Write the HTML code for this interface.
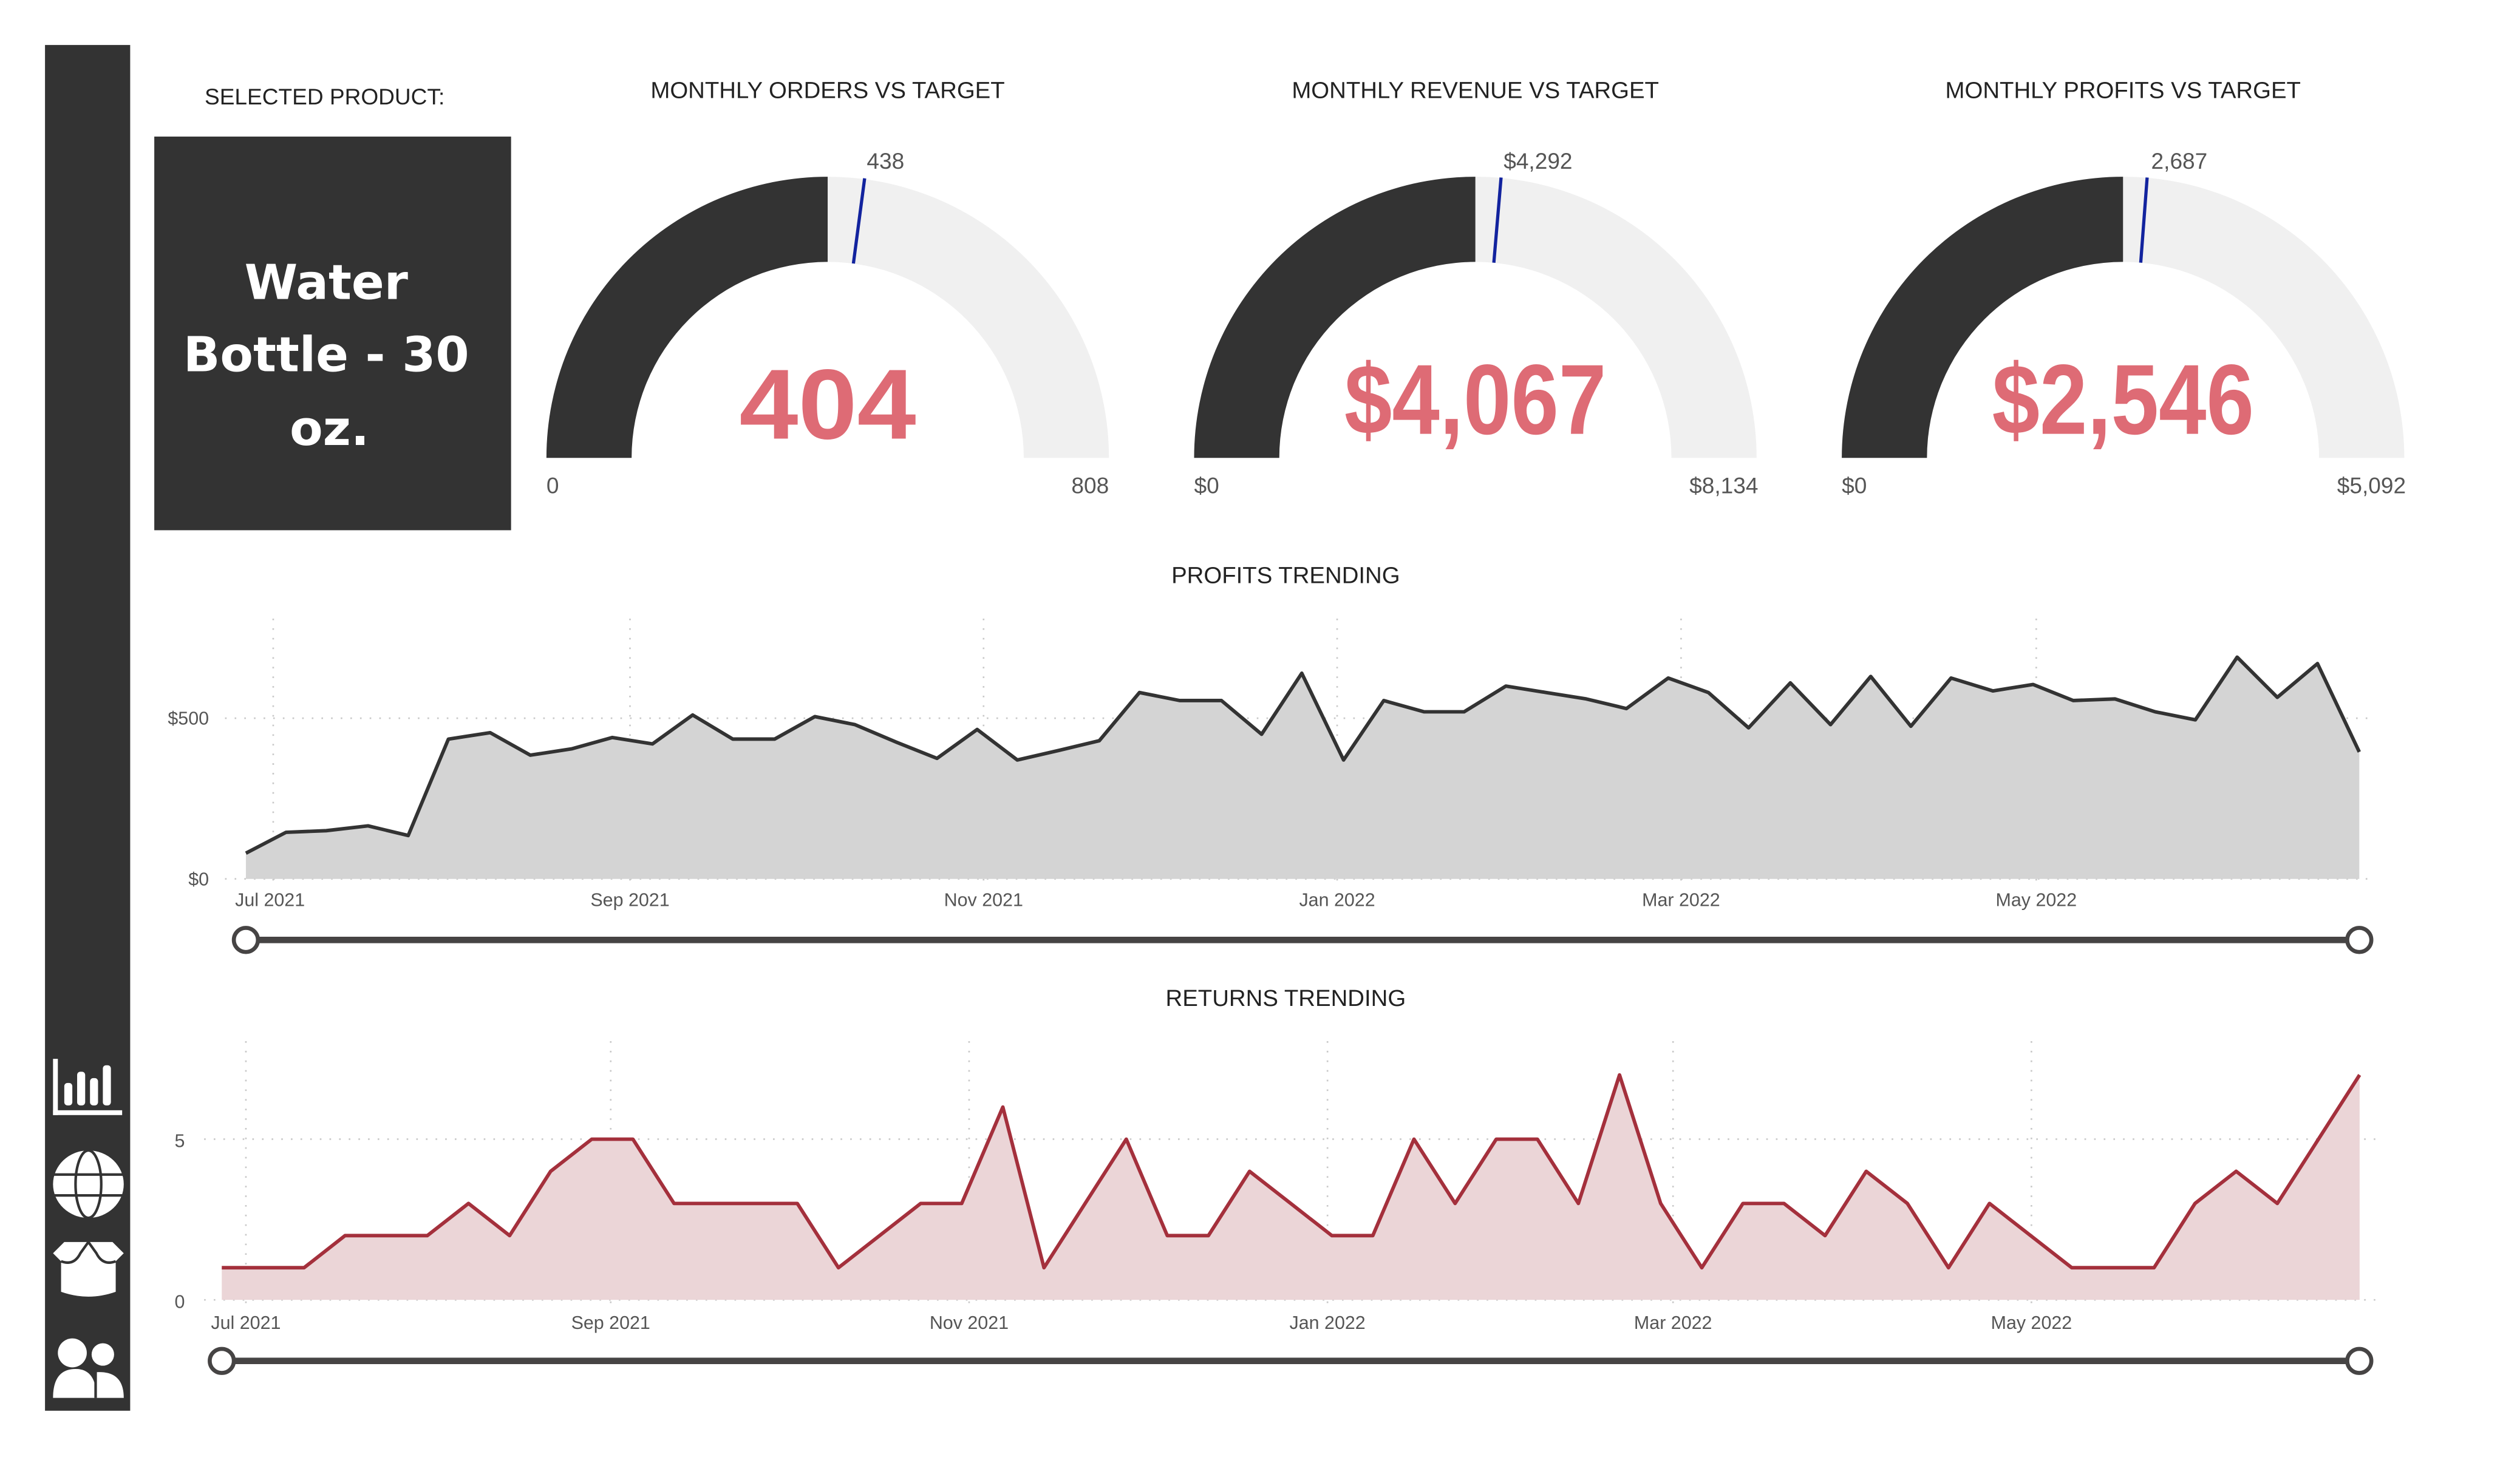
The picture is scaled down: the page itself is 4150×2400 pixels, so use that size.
<!DOCTYPE html>
<html><head><meta charset="utf-8"><style>html,body{margin:0;padding:0;background:#fff;width:4150px;height:2400px;overflow:hidden}svg{display:block}</style></head>
<body>
<svg width="4150" height="2400" viewBox="0 0 1568 906.8" preserveAspectRatio="none" xmlns="http://www.w3.org/2000/svg" font-family="'DejaVu Sans','Liberation Sans',sans-serif">
<rect x="0" y="0" width="1568" height="906.8" fill="#fff"/>
<!-- sidebar -->
<rect x="28" y="28" width="53" height="850" fill="#333"/>
<g fill="#fff">
 <rect x="33" y="659" width="3" height="35"/><rect x="33" y="691" width="43" height="3"/>
 <rect x="40" y="674" width="5" height="14" rx="2"/><rect x="48" y="667" width="5" height="21" rx="2"/><rect x="56" y="671" width="5" height="17" rx="2"/><rect x="64" y="663" width="5" height="25" rx="2"/>
 <ellipse cx="55" cy="737" rx="22" ry="21"/>
 <path d="M33 780 L40 773 L70 773 L77 780 L72 785 L72 804 Q55 810 38 804 L38 785 Z"/>
 <circle cx="45" cy="842" r="9"/><circle cx="64" cy="843" r="7"/>
 <path d="M33 870 Q33 852 47 852 Q60 852 60 870 Z"/><path d="M60 870 L60 854 Q77 853 77 870 Z"/>
</g>
<g stroke="#333" fill="none" stroke-width="1.6">
 <ellipse cx="55" cy="737" rx="8" ry="21"/><line x1="33" y1="731" x2="77" y2="731"/><line x1="33" y1="744" x2="77" y2="744"/>
 <path d="M38 785 Q46 788 50 780 L55 773 L60 780 Q64 788 72 785"/>
 <line x1="59.5" y1="852" x2="59.5" y2="870"/>
</g>
<!-- selected product -->
<text x="202" y="65" font-size="14" fill="#222" text-anchor="middle" font-family="'Liberation Sans',sans-serif">SELECTED PRODUCT:</text>
<rect x="96" y="85" width="222" height="245" fill="#333"/>
<g font-weight="bold" font-size="30" fill="#fff" text-anchor="middle">
<text x="203" y="186">Water</text><text x="203" y="231">Bottle - 30</text><text x="205" y="277">oz.</text>
</g>
<!-- gauges -->
<g font-family="'Liberation Sans',sans-serif">
<text x="515" y="61" font-size="14.5" fill="#222" text-anchor="middle">MONTHLY ORDERS VS TARGET</text>
<text x="918" y="61" font-size="14.5" fill="#222" text-anchor="middle">MONTHLY REVENUE VS TARGET</text>
<text x="1321" y="61" font-size="14.5" fill="#222" text-anchor="middle">MONTHLY PROFITS VS TARGET</text>
</g>
<g>
 <path d="M515 110 A175 175 0 0 1 690 285 L637 285 A122 122 0 0 0 515 163 Z" fill="#f0f0f0"/>
 <path d="M340 285 A175 175 0 0 1 515 110 L515 163 A122 122 0 0 0 393 285 Z" fill="#333"/>
 <line x1="538" y1="111" x2="531" y2="164" stroke="#12239e" stroke-width="2"/>
 <path d="M918 110 A175 175 0 0 1 1093 285 L1040 285 A122 122 0 0 0 918 163 Z" fill="#f0f0f0"/>
 <path d="M743 285 A175 175 0 0 1 918 110 L918 163 A122 122 0 0 0 796 285 Z" fill="#333"/>
 <line x1="934" y1="110.5" x2="929.5" y2="163.5" stroke="#12239e" stroke-width="2"/>
 <path d="M1321 110 A175 175 0 0 1 1496 285 L1443 285 A122 122 0 0 0 1321 163 Z" fill="#f0f0f0"/>
 <path d="M1146 285 A175 175 0 0 1 1321 110 L1321 163 A122 122 0 0 0 1199 285 Z" fill="#333"/>
 <line x1="1336" y1="110.5" x2="1332" y2="163.5" stroke="#12239e" stroke-width="2"/>
</g>
<g font-family="'Liberation Sans',sans-serif" font-size="14" fill="#555">
 <text x="551" y="105" text-anchor="middle">438</text>
 <text x="957" y="105" text-anchor="middle">$4,292</text>
 <text x="1356" y="105" text-anchor="middle">2,687</text>
 <text x="340" y="307">0</text><text x="690" y="307" text-anchor="end">808</text>
 <text x="743" y="307">$0</text><text x="1094" y="307" text-anchor="end">$8,134</text>
 <text x="1146" y="307">$0</text><text x="1497" y="307" text-anchor="end">$5,092</text>
</g>
<g font-family="'Liberation Sans',sans-serif" font-weight="bold" font-size="62" fill="#de6b75" text-anchor="middle">
 <text x="515" y="273" textLength="110" lengthAdjust="spacingAndGlyphs">404</text>
 <text x="918" y="270" textLength="163" lengthAdjust="spacingAndGlyphs">$4,067</text>
 <text x="1321" y="270" textLength="163" lengthAdjust="spacingAndGlyphs">$2,546</text>
</g>
<!-- profits trending -->
<text x="800" y="363" font-size="14.5" fill="#222" text-anchor="middle" font-family="'Liberation Sans',sans-serif">PROFITS TRENDING</text>
<g stroke="#c8c8c8" stroke-width="1" stroke-dasharray="1 5">
 <line x1="140" y1="447" x2="1478" y2="447"/><line x1="140" y1="547" x2="1478" y2="547"/>
 <line x1="170" y1="385" x2="170" y2="550"/><line x1="392" y1="385" x2="392" y2="550"/><line x1="612" y1="385" x2="612" y2="550"/><line x1="832" y1="385" x2="832" y2="550"/><line x1="1046" y1="385" x2="1046" y2="550"/><line x1="1267" y1="385" x2="1267" y2="550"/>
</g>
<polygon fill="#d4d4d4" points="153,547 153,531 178,518 203,517 229,514 254,520 279,460 305,456 330,470 356,466 381,459 406,463 431,445 456,460 482,460 507,446 532,451 558,462 583,472 608,454 633,473 659,467 684,461 709,431 734,436 760,436 785,457 810,419 836,473 861,436 886,443 911,443 937,427 962,431 987,435 1012,441 1038,422 1063,431 1088,453 1114,425 1139,451 1164,421 1189,452 1214,422 1240,430 1265,426 1290,436 1316,435 1341,443 1366,448 1392,409 1417,434 1442,413 1468,468 1468,547"/>
<polyline fill="none" stroke="#333" stroke-width="2.2" stroke-linejoin="round" points="153,531 178,518 203,517 229,514 254,520 279,460 305,456 330,470 356,466 381,459 406,463 431,445 456,460 482,460 507,446 532,451 558,462 583,472 608,454 633,473 659,467 684,461 709,431 734,436 760,436 785,457 810,419 836,473 861,436 886,443 911,443 937,427 962,431 987,435 1012,441 1038,422 1063,431 1088,453 1114,425 1139,451 1164,421 1189,452 1214,422 1240,430 1265,426 1290,436 1316,435 1341,443 1366,448 1392,409 1417,434 1442,413 1468,468"/>
<g font-family="'Liberation Sans',sans-serif" font-size="11.5" fill="#555">
 <text x="130" y="451" text-anchor="end">$500</text><text x="130" y="551" text-anchor="end">$0</text>
 <g text-anchor="middle"><text x="168" y="564">Jul 2021</text><text x="392" y="564">Sep 2021</text><text x="612" y="564">Nov 2021</text><text x="832" y="564">Jan 2022</text><text x="1046" y="564">Mar 2022</text><text x="1267" y="564">May 2022</text></g>
</g>
<line x1="153" y1="585" x2="1468" y2="585" stroke="#464444" stroke-width="4"/>
<circle cx="153" cy="585" r="7.5" fill="#fff" stroke="#464444" stroke-width="2.5"/>
<circle cx="1468" cy="585" r="7.5" fill="#fff" stroke="#464444" stroke-width="2.5"/>
<!-- returns trending -->
<text x="800" y="626" font-size="14.5" fill="#222" text-anchor="middle" font-family="'Liberation Sans',sans-serif">RETURNS TRENDING</text>
<g stroke="#c8c8c8" stroke-width="1" stroke-dasharray="1 5">
 <line x1="127" y1="709" x2="1478" y2="709"/><line x1="127" y1="809" x2="1478" y2="809"/>
 <line x1="153" y1="648" x2="153" y2="812"/><line x1="380" y1="648" x2="380" y2="812"/><line x1="603" y1="648" x2="603" y2="812"/><line x1="826" y1="648" x2="826" y2="812"/><line x1="1041" y1="648" x2="1041" y2="812"/><line x1="1264" y1="648" x2="1264" y2="812"/>
</g>
<polygon fill="#ebd5d7" points="138,809 138,789 163.6,789 189.2,789 214.7,769 240.3,769 265.9,769 291.5,749 317.1,769 342.6,729 368.2,709 393.8,709 419.4,749 445,749 470.5,749 496.1,749 521.7,789 547.3,769 572.9,749 598.4,749 624,689 649.6,789 675.2,749 700.8,709 726.3,769 751.9,769 777.5,729 803.1,749 828.7,769 854.2,769 879.8,709 905.4,749 931,709 956.6,709 982.1,749 1007.7,669 1033.3,749 1058.9,789 1084.5,749 1110,749 1135.6,769 1161.2,729 1186.8,749 1212.4,789 1237.9,749 1263.5,769 1289.1,789 1314.7,789 1340.3,789 1365.8,749 1391.4,729 1417,749 1442.6,709 1468.2,669 1468.2,809"/>
<polyline fill="none" stroke="#a4303c" stroke-width="2.2" stroke-linejoin="round" points="138,789 163.6,789 189.2,789 214.7,769 240.3,769 265.9,769 291.5,749 317.1,769 342.6,729 368.2,709 393.8,709 419.4,749 445,749 470.5,749 496.1,749 521.7,789 547.3,769 572.9,749 598.4,749 624,689 649.6,789 675.2,749 700.8,709 726.3,769 751.9,769 777.5,729 803.1,749 828.7,769 854.2,769 879.8,709 905.4,749 931,709 956.6,709 982.1,749 1007.7,669 1033.3,749 1058.9,789 1084.5,749 1110,749 1135.6,769 1161.2,729 1186.8,749 1212.4,789 1237.9,749 1263.5,769 1289.1,789 1314.7,789 1340.3,789 1365.8,749 1391.4,729 1417,749 1442.6,709 1468.2,669"/>
<g font-family="'Liberation Sans',sans-serif" font-size="11.5" fill="#555">
 <text x="115" y="714" text-anchor="end">5</text><text x="115" y="814" text-anchor="end">0</text>
 <g text-anchor="middle"><text x="153" y="827">Jul 2021</text><text x="380" y="827">Sep 2021</text><text x="603" y="827">Nov 2021</text><text x="826" y="827">Jan 2022</text><text x="1041" y="827">Mar 2022</text><text x="1264" y="827">May 2022</text></g>
</g>
<line x1="138" y1="847" x2="1468" y2="847" stroke="#464444" stroke-width="4"/>
<circle cx="138" cy="847" r="7.5" fill="#fff" stroke="#464444" stroke-width="2.5"/>
<circle cx="1468" cy="847" r="7.5" fill="#fff" stroke="#464444" stroke-width="2.5"/>
</svg>
</body></html>
